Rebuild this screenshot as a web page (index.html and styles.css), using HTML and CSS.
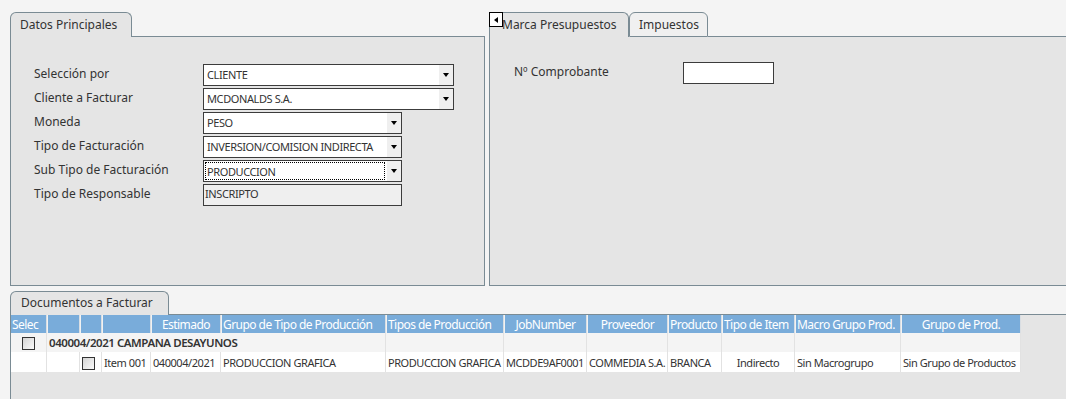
FILE: index.html
```html
<!DOCTYPE html>
<html lang="es">
<head>
    <meta charset="UTF-8">
    <meta name="viewport" content="width=device-width, initial-scale=1.0">
    <title>Facturación</title>
    <link rel="stylesheet" href="styles.css">
</head>
<body>
    <div class="top">
        <section class="panel panel-left">
            <div class="tabs">
                <div class="tab active tab-datos">Datos Principales</div>
                <div class="tab-fill"></div>
            </div>
            <div class="panel-body form">
                <div class="form-row">
                    <label>Selección por</label>
                    <div class="select wide"><span class="value">CLIENTE</span><span class="arrow"></span></div>
                </div>
                <div class="form-row">
                    <label>Cliente a Facturar</label>
                    <div class="select wide"><span class="value">MCDONALDS S.A.</span><span class="arrow"></span></div>
                </div>
                <div class="form-row">
                    <label>Moneda</label>
                    <div class="select"><span class="value">PESO</span><span class="arrow"></span></div>
                </div>
                <div class="form-row">
                    <label>Tipo de Facturación</label>
                    <div class="select"><span class="value">INVERSION/COMISION INDIRECTA</span><span class="arrow"></span></div>
                </div>
                <div class="form-row">
                    <label>Sub Tipo de Facturación</label>
                    <div class="select"><span class="value focused">PRODUCCION</span><span class="arrow"></span></div>
                </div>
                <div class="form-row">
                    <label>Tipo de Responsable</label>
                    <div class="readonly">INSCRIPTO</div>
                </div>
            </div>
        </section>

        <section class="panel panel-right">
            <span class="scroll-btn"></span>
            <div class="tabs">
                <div class="tab active tab-marca">Marca Presupuestos</div>
                <div class="tab tab-impuestos">Impuestos</div>
                <div class="tab-fill"></div>
            </div>
            <div class="panel-body form form-right">
                <div class="form-row">
                    <label>Nº Comprobante</label>
                    <div class="text-input"></div>
                </div>
            </div>
        </section>
    </div>

    <section class="panel panel-docs">
        <div class="tabs">
            <div class="tab active tab-docs">Documentos a Facturar</div>
            <div class="tab-fill"></div>
        </div>
        <div class="panel-body grid-body">
            <table class="grid">
                <colgroup>
                    <col class="w-selec"><col class="w-c2"><col class="w-c3"><col class="w-c4">
                    <col class="w-est"><col class="w-grupo"><col class="w-tipos"><col class="w-job">
                    <col class="w-prov"><col class="w-prod"><col class="w-item"><col class="w-macro">
                    <col class="w-gprod">
                </colgroup>
                <thead>
                    <tr>
                        <th>Selec</th>
                        <th></th>
                        <th></th>
                        <th></th>
                        <th class="center">Estimado</th>
                        <th>Grupo de Tipo de Producción</th>
                        <th>Tipos de Producción</th>
                        <th class="center">JobNumber</th>
                        <th class="center">Proveedor</th>
                        <th>Producto</th>
                        <th>Tipo de Item</th>
                        <th>Macro Grupo Prod.</th>
                        <th class="center">Grupo de Prod.</th>
                    </tr>
                </thead>
                <tbody>
                    <tr class="group-row">
                        <td class="center"><span class="check"></span></td>
                        <td colspan="5" class="group-title">040004/2021 CAMPANA DESAYUNOS</td>
                        <td></td>
                        <td></td>
                        <td></td>
                        <td></td>
                        <td></td>
                        <td></td>
                        <td></td>
                    </tr>
                    <tr class="item-row">
                        <td></td>
                        <td></td>
                        <td class="check-cell"><span class="check"></span></td>
                        <td>Item 001</td>
                        <td>040004/2021</td>
                        <td>PRODUCCION GRAFICA</td>
                        <td>PRODUCCION GRAFICA</td>
                        <td>MCDDE9AF0001</td>
                        <td>COMMEDIA S.A.</td>
                        <td>BRANCA</td>
                        <td class="center">Indirecto</td>
                        <td>Sin Macrogrupo</td>
                        <td>Sin Grupo de Productos</td>
                    </tr>
                </tbody>
            </table>
        </div>
    </section>
</body>
</html>
```

FILE: styles.css
```css
html, body {
    height: 100%;
}
body {
    margin: 0;
    background-color: #f4f4f4;
    font-family: "Noto Sans", "DejaVu Sans", sans-serif;
    font-size: 12px;
    color: #333;
    display: flex;
    flex-direction: column;
    overflow: hidden;
}
.top {
    display: flex;
    padding-top: 12px;
}
.panel {
    display: flex;
    flex-direction: column;
}
.panel-left {
    margin-left: 10px;
    width: 475px;
}
.panel-right {
    margin-left: 4px;
    flex: 1;
    position: relative;
}
.panel-docs {
    margin: 5px 0 0 10px;
    flex: 1;
}

/* pestañas */
.tabs {
    display: flex;
    height: 25px;
}
.tab {
    box-sizing: border-box;
    height: 25px;
    border: 1px solid #7a8b94;
    border-radius: 6px 6px 0 0;
    padding: 3px 0 0 9px;
    background-color: #f0f0f0;
    white-space: nowrap;
    overflow: hidden;
}
.tab.active {
    border-bottom: none;
    background-color: #e5e5e5;
}
.tab-fill {
    flex: 1;
    border-bottom: 1px solid #7a8b94;
}
.tab-datos { width: 122px; }
.tab-marca { width: 140px; padding-left: 12px; }
.tab-impuestos { width: 79px; }
.panel-docs .tabs { height: 24px; }
.panel-docs .tab { height: 24px; padding-top: 2px; padding-left: 10px; }
.tab-docs { width: 159px; }

.panel-body {
    box-sizing: border-box;
    background-color: #e5e5e5;
    border-left: 1px solid #7a8b94;
}
.panel-left .panel-body {
    height: 249px;
    border-right: 1px solid #7a8b94;
    border-bottom: 1px solid #7a8b94;
}
.panel-right .panel-body {
    height: 249px;
    border-bottom: 1px solid #7a8b94;
}
.grid-body {
    flex: 1;
}

.scroll-btn {
    position: absolute;
    top: 0;
    left: 0;
    box-sizing: border-box;
    width: 14px;
    height: 15px;
    background-color: #fff;
    border: 1px solid #000;
    display: flex;
    align-items: center;
    justify-content: center;
}
.scroll-btn::before {
    content: "";
    border-right: 4px solid #000;
    border-top: 3px solid transparent;
    border-bottom: 3px solid transparent;
}

/* formulario */
.form {
    padding: 27px 0 0 23px;
}
.form-right {
    padding: 25px 0 0 24px;
}
.form-row {
    display: flex;
    align-items: center;
    height: 22px;
    margin-bottom: 2px;
}
.form-row label {
    width: 169px;
    flex-shrink: 0;
    margin-top: -3px;
}
.select, .readonly, .text-input {
    box-sizing: border-box;
    height: 22px;
    border: 1px solid #3c3c3c;
    background-color: #fff;
    font-size: 11px;
    letter-spacing: -0.4px;
}
.select {
    width: 199px;
    display: flex;
}
.select.wide {
    width: 251px;
}
.select .value {
    flex: 1;
    padding: 2px 0 0 3px;
}
.select .value.focused {
    margin: 1px 2px 1px 1px;
    padding: 1px 0 0 1px;
    border: 1px dotted #000;
}
.select .arrow {
    width: 14px;
    background-color: #efefef;
    display: flex;
    align-items: center;
    justify-content: center;
}
.select .arrow::before {
    content: "";
    border-top: 4px solid #000;
    border-left: 3.5px solid transparent;
    border-right: 3.5px solid transparent;
}
.readonly {
    width: 199px;
    background-color: #efefef;
    padding: 1px 0 0 1px;
}
.text-input {
    width: 91px;
}

/* grilla */
.grid {
    table-layout: fixed;
    border-collapse: separate;
    border-spacing: 0;
    width: 1010px;
    font-size: 11px;
    letter-spacing: -0.45px;
}
.w-selec { width: 36px; }
.w-c2 { width: 33px; }
.w-c3 { width: 22px; }
.w-c4 { width: 49px; }
.w-est { width: 70px; }
.w-grupo { width: 165px; }
.w-tipos { width: 118px; }
.w-job { width: 83px; }
.w-prov { width: 81px; }
.w-prod { width: 54px; }
.w-item { width: 73px; }
.w-macro { width: 106px; }
.w-gprod { width: 120px; }
.grid th {
    height: 18px;
    padding: 0 0 0 1px;
    background-color: #79acda;
    color: #fff;
    font-weight: normal;
    font-size: 12px;
    letter-spacing: -0.55px;
    text-align: left;
    white-space: nowrap;
    overflow: hidden;
    border-right: 1px solid #d9dee3;
    border-left: 1px solid #f2f2f2;
}
.grid th:first-child {
    border-left: none;
}
.grid td {
    padding: 0 0 0 2px;
    white-space: nowrap;
    overflow: hidden;
    border-right: 1px solid #e2e2e2;
    color: #333;
}
.grid .center {
    text-align: center;
    padding-left: 0;
}
.group-row td {
    height: 19px;
    background-color: #f4f4f4;
}
.group-title {
    font-size: 11.5px;
    font-weight: 600;
    color: #2b2b2b;
}
.item-row td {
    height: 20px;
    background-color: #fff;
}
.check-cell {
    padding-left: 1px;
}
.check {
    display: inline-block;
    vertical-align: middle;
    box-sizing: border-box;
    width: 13px;
    height: 13px;
    border: 1px solid #333;
    background: linear-gradient(135deg, #d4d4d4, #fafafa);
}
```
